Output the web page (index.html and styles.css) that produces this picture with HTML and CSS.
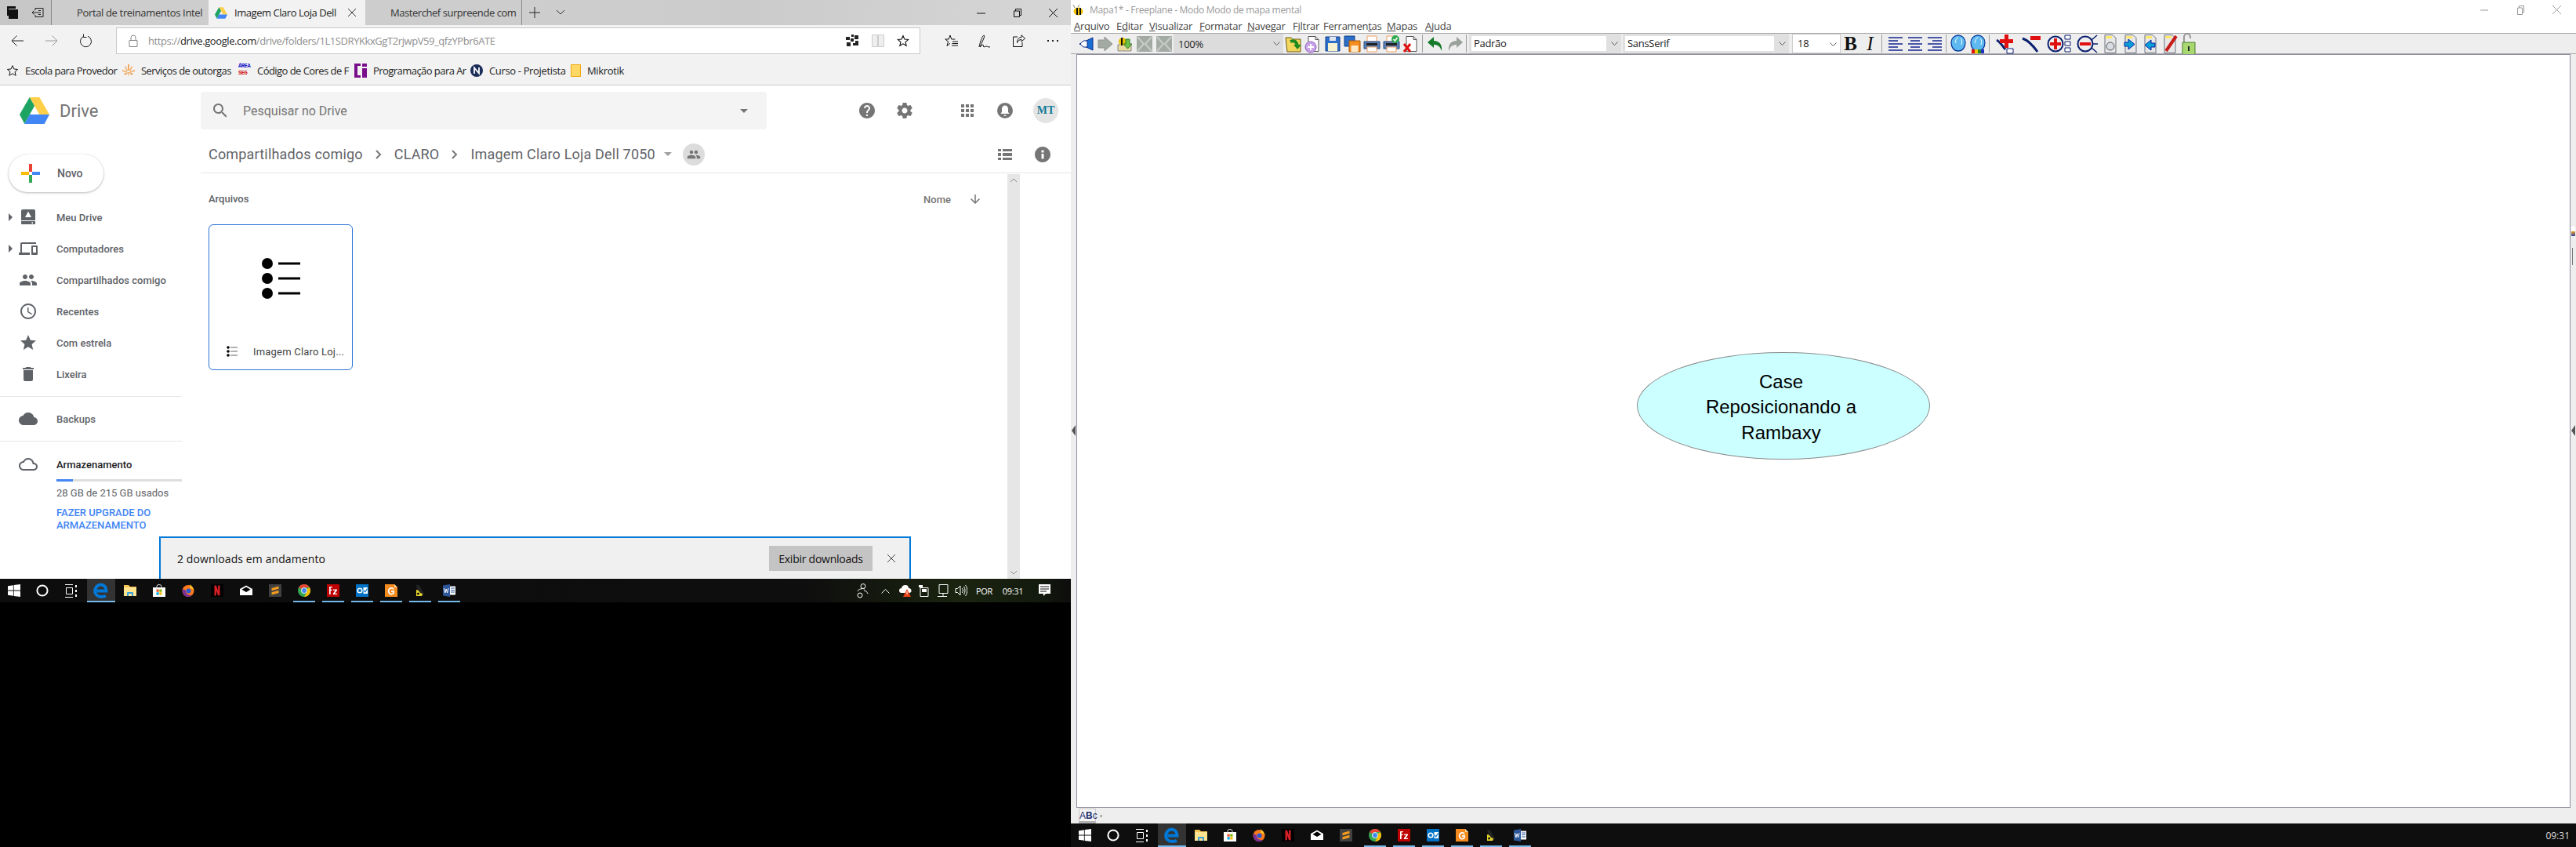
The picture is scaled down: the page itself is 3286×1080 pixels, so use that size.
FILE: index.html
```html
<!DOCTYPE html>
<html lang="pt">
<head>
<meta charset="utf-8">
<title>Google Drive e Freeplane</title>
<link rel="stylesheet" href="styles.css">
</head>
<body>
<svg class="defs" width="0" height="0" aria-hidden="true">
  <defs>
    <symbol id="drive" viewBox="0 0 38 34"><path fill="#ffcf4a" d="M12.7 0h12.6L38 22H25.3z"/><path fill="#1da462" d="M12.7 0L0 22l6.3 12L19 11z"/><path fill="#4285f4" d="M6.3 34h25.4L38 22H12.7z"/></symbol>
    <symbol id="win" viewBox="0 0 16 16"><path fill="#fff" d="M0 2.2l6.9-1v6.4H0zM7.7 1.1L16 0v7.6H7.7zM0 8.4h6.9v6.4l-6.9-1zM7.7 8.4H16V16l-8.3-1.1z"/></symbol>
    <symbol id="cortana" viewBox="0 0 16 16"><circle cx="8" cy="8" r="6.6" fill="none" stroke="#fff" stroke-width="2"/></symbol>
    <symbol id="taskview" viewBox="0 0 17 17"><path fill="none" stroke="#fff" d="M1 .5h10M1 16.500h10M2.500 4.500h8v8h-8z"/><path fill="#fff" d="M14 1h2v3h-2zM14 7h2v3h-2zM14 13h2v3h-2z"/></symbol>
    <symbol id="edge" viewBox="0 0 20 20"><path fill="none" stroke="#0078d7" stroke-width="4" d="M4.500 10.500h12c0-5-3-8-7-8S2.200 6 2.200 10.500 6 18 11 18c2 0 3.500-.4 5-1.200"/></symbol>
    <symbol id="explorer" viewBox="0 0 16 16"><path fill="#f6c452" d="M0 1h6l2 2h8v12H0z"/><path fill="#ffe38f" d="M0 4h16v11H0z"/><path fill="#3aa0dc" d="M4 15v-4a1 1 0 0 1 1-1h6a1 1 0 0 1 1 1v4h-2v-3H6v3z"/></symbol>
    <symbol id="store" viewBox="0 0 16 16"><path fill="#fff" d="M0 4h16v12H0z"/><path fill="none" stroke="#ddd" d="M5 5V2.500a3 2 0 0 1 6 0V5"/><path fill="#f25022" d="M4.500 6.500h3.200v3.200H4.500z"/><path fill="#7fba00" d="M8.300 6.500h3.200v3.200H8.300z"/><path fill="#00a4ef" d="M4.500 10.300h3.200v3.200H4.500z"/><path fill="#ffb900" d="M8.300 10.300h3.200v3.200H8.300z"/></symbol>
    <symbol id="firefox" viewBox="0 0 16 16"><circle cx="8" cy="8.500" r="7.500" fill="#ff7a1a"/><path fill="#7a2e9c" d="M1 6c-1 5 2 10 7 10 2 0 4-1 5-2.500C9 15 4 12 5 8z"/><path fill="#ffc928" d="M10 0c3 2 5 5 5 8-1-2-3-3-5-3 1-2 1-3 0-5z"/><circle cx="8.500" cy="8.500" r="3" fill="#2a5bd7"/></symbol>
    <symbol id="netflix" viewBox="0 0 16 16"><path fill="#000" d="M0 0h16v16H0z"/><path fill="#d81f26" d="M4.500 1.500h2.400l2.200 6.500V1.500h2.400v13l-2.400-.3L6.900 8v6.200l-2.400.3z"/></symbol>
    <symbol id="mail" viewBox="0 0 16 16"><path fill="#fff" d="M0 6l8-4.500L16 6v8H0z"/><path fill="#000" d="M2.500 6.800L8 3.500l5.500 3.300L8 10z"/></symbol>
    <symbol id="sublime" viewBox="0 0 16 16"><path fill="#414141" d="M0 0h16v16H0z"/><path fill="#f59b1c" d="M12.500 2.500v3.200L3.500 8.300V5zM3.500 13.500v-3.200l9-2.600v3.300z"/></symbol>
    <symbol id="chrome" viewBox="0 0 16 16"><circle cx="8" cy="8" r="8" fill="#34a853"/><path fill="#ea4335" d="M1.100 4C2.500 1.600 5 0 8 0c3 0 5.500 1.600 6.900 4H8a4 4 0 0 0-3.500 2z"/><path fill="#fbbc05" d="M14.900 4c1.500 2.500 1.400 5.500 0 8-1.400 2.400-4 4-6.900 4l3.500-6a4 4 0 0 0 0-4z"/><circle cx="8" cy="8" r="3.800" fill="#fff"/><circle cx="8" cy="8" r="2.900" fill="#4285f4"/></symbol>
    <symbol id="filezilla" viewBox="0 0 16 16"><path fill="#bf0000" d="M0 0h16v16H0z"/><path fill="#fff" d="M3 3h4v1.300H4.700v2.500h2v1.300h-2V13H3zM8 6.500h5v1.200l-3 4h3V13H7.800v-1.200l3-4H8z"/></symbol>
    <symbol id="outlook" viewBox="0 0 16 16"><path fill="#0072c6" d="M0 0h16v16H0z"/><circle cx="5" cy="8" r="2.800" fill="none" stroke="#fff" stroke-width="1.600"/><path fill="#fff" d="M9.500 4H15v8H9.500z"/><path fill="none" stroke="#0072c6" stroke-width="1.200" d="M10 8l1.800 1.800L14.500 5.500"/></symbol>
    <symbol id="gorange" viewBox="0 0 16 16"><path fill="#f58b1f" d="M0 0h12l4 4v12H0z"/><path fill="#ffd9a8" d="M12 0l4 4h-4z"/><path fill="none" stroke="#fff" stroke-width="1.800" d="M11 6.500A3.500 3.800 0 1 0 11 11V8.800H8"/></symbol>
    <symbol id="linux" viewBox="0 0 16 16"><path fill="#222" d="M3 1c3-1 5 1 6 4l4 7-2 3H6z"/><path fill="#e8d72a" d="M3 7c2 0 4 2 5 4l3 1-1 3H3z"/><circle cx="5.500" cy="12" r="1.500" fill="#111"/></symbol>
    <symbol id="word" viewBox="0 0 16 16"><path fill="#2b579a" d="M0 1.500L9 0v16l-9-1.500z"/><path fill="#fff" d="M9 2.500h7v11H9z"/><path fill="#2b579a" d="M10 4.500h5v1h-5zM10 7h5v1h-5zM10 9.500h5v1h-5z"/><path fill="none" stroke="#fff" d="M1.500 5l1.300 6 1.400-5 1.400 5L7 5"/></symbol>
    <symbol id="i-help" viewBox="0 0 24 24"><path d="M12 2C6.480 2 2 6.480 2 12s4.480 10 10 10 10-4.480 10-10S17.520 2 12 2zm1 17h-2v-2h2v2zm2.070-7.750l-.9.920C13.450 12.900 13 13.500 13 15h-2v-.5c0-1.100.45-2.100 1.170-2.830l1.240-1.260c.37-.36.59-.86.59-1.410 0-1.100-.9-2-2-2s-2 .9-2 2H8c0-2.210 1.790-4 4-4s4 1.790 4 4c0 .88-.36 1.680-.93 2.250z"/></symbol>
    <symbol id="arrow-l" viewBox="0 0 22 22"><path fill="#1a6fd4" stroke="#0a2a88" d="M20 3v16L3 11z"/><path fill="#fff" stroke="#0a2a88" d="M8 7h5v8H8l-4-4z"/></symbol>
    <symbol id="arrow-gray" viewBox="0 0 22 22"><path fill="#a3a9a3" stroke="#8f958f" d="M2 6h8V2l10 9-10 9v-4H2z"/></symbol>
    <symbol id="cross-gray" viewBox="0 0 22 22"><path fill="#a3a9a3" d="M1 1h20v20H1z"/><path fill="none" stroke="#c9cdc9" stroke-width="2" d="M2 2l8 9-8 9M20 2l-8 9 8 9"/></symbol>
    <symbol id="doc" viewBox="0 0 22 22"><path fill="#fff" stroke="#555" d="M5 1.500h9l4 4v15H5z"/><path fill="none" stroke="#555" d="M14 1.500v4h4"/></symbol>
    <symbol id="floppy" viewBox="0 0 22 22"><path fill="#2d6ec9" stroke="#123e87" d="M2 2h18v18H2z"/><path fill="#f7f2d0" d="M5 10h12v10H5z"/><path fill="#dfe6ef" d="M7 2h8v5H7z"/></symbol>
    <symbol id="floppy-o" viewBox="0 0 22 22"><path fill="#2d6ec9" stroke="#123e87" d="M1 1h13v13H1z"/><path fill="#f58d20" stroke="#a85a0a" d="M7 7h14v14H7z"/><path fill="#ffe9c4" d="M9.500 13h9v8h-9z"/></symbol>
    <symbol id="printer" viewBox="0 0 22 22"><path fill="#fff" stroke="#f0a060" d="M5 1h12v7H5z"/><path fill="#5c80b4" stroke="#2a4a80" d="M1 8h20v9H1z"/><path fill="#222" d="M4 10h14v3H4z"/><path fill="#fff" stroke="#f0a060" d="M5 15h12v6H5z"/></symbol>
    <symbol id="lines-l" viewBox="0 0 22 22"><path fill="none" stroke="#4a56a8" stroke-width="2" d="M2 3h18M2 7h12M2 11h18M2 15h12M2 19h18"/></symbol>
    <symbol id="lines-c" viewBox="0 0 22 22"><path fill="none" stroke="#4a56a8" stroke-width="2" d="M2 3h18M5 7h12M2 11h18M5 15h12M2 19h18"/></symbol>
    <symbol id="lines-r" viewBox="0 0 22 22"><path fill="none" stroke="#4a56a8" stroke-width="2" d="M2 3h18M8 7h12M2 11h18M8 15h12M2 19h18"/></symbol>
    <symbol id="fp-cloud" viewBox="0 0 22 26"><path fill="#5db9ef" stroke="#0f3d9e" stroke-width="1.300" d="M11 2c5 0 9 4 9 9 0 6-3 11-9 11S2 17 2 11c0-5 4-9 9-9z"/><path fill="none" stroke="#fff" d="M11 5c-3 1-4 4-3 7M14 6c2 2 2 5 1 8"/></symbol>
    <symbol id="page" viewBox="0 0 22 26"><path fill="#e8e8e8" stroke="#6e7280" d="M5 1.500h10l4 4v19H5z"/><path fill="#ffe96a" d="M6 3h8v3H6z"/></symbol>
  </defs>
</svg>

<div class="screen screen-left">
  <section class="edge-window">
    <div class="tabbar">
      <div class="tabbar-tools">
        <span class="slot-32"><svg width="16" height="18" viewBox="0 0 16 18"><path fill="#111" d="M1 1h11v3H1zM3 5h12v12H3z"/><path fill="#111" d="M1 4h2v9H1z"/></svg></span>
        <span class="slot-32"><svg width="16" height="14" viewBox="0 0 16 14"><path fill="none" stroke="#222" d="M5 4V1.500h10v11H5V10M1 7h8M3.500 4.500L1 7l2.500 2.500M9 4.500h3M9 7h3M9 9.500h3"/></svg></span>
      </div>
      <div class="tab"><span class="tab-title">Portal de treinamentos Intel</span></div>
      <div class="tab tab-active">
        <svg class="tab-favicon" width="16" height="15"><use href="#drive"/></svg>
        <span class="tab-title tab-title-active">Imagem Claro Loja Dell</span>
        <svg class="tab-x" width="12" height="12" viewBox="0 0 12 12"><path stroke="#333" fill="none" d="M1 1l10 10M11 1L1 11"/></svg>
      </div>
      <div class="tab tab-last"><span class="tab-title">Masterchef surpreende com</span></div>
      <span class="slot-32"><svg width="14" height="14" viewBox="0 0 14 14"><path stroke="#222" fill="none" d="M7 0v14M0 7h14"/></svg></span>
      <span class="slot-34"><svg width="12" height="8" viewBox="0 0 12 8"><path stroke="#333" fill="none" d="M1 1l5 5 5-5"/></svg></span>
      <div class="win-controls">
        <span class="win-btn"><svg width="11" height="11" viewBox="0 0 11 11"><path stroke="#111" d="M0 6h11"/></svg></span>
        <span class="win-btn"><svg width="11" height="11" viewBox="0 0 11 11"><path fill="none" stroke="#111" d="M1.500 3h7v7.500h-7zM3.500 3V.5h7v8H8.500"/></svg></span>
        <span class="win-btn"><svg width="11" height="11" viewBox="0 0 11 11"><path fill="none" stroke="#111" d="M0 0l11 11M11 0L0 11"/></svg></span>
      </div>
    </div>

    <div class="navbar">
      <span class="nav-btn"><svg width="16" height="14" viewBox="0 0 16 14"><path fill="none" stroke="#222" d="M16 7H1M7.500 .5L1 7l6.500 6.500"/></svg></span>
      <span class="nav-btn"><svg width="16" height="14" viewBox="0 0 16 14"><path fill="none" stroke="#999" d="M0 7h15M8.500 .5L15 7l-6.500 6.500"/></svg></span>
      <span class="nav-btn"><svg width="16" height="18" viewBox="0 0 16 18"><path fill="none" stroke="#222" d="M10 3.200A7 7 0 1 1 4.500 3.400M4.500 .5v4h4"/></svg></span>
      <div class="address">
        <svg class="lock" width="12" height="16" viewBox="0 0 12 16"><path fill="none" stroke="#888" d="M1 7.500h10v8H1zM3 7.500V4a3 3 0 0 1 6 0v3.500"/></svg>
        <span class="url">https://<b class="url-host">drive.google.com</b>/drive/folders/1L1SDRYKkxGgT2rjwpV59_qfzYPbr6ATE</span>
        <span class="addr-tools">
          <svg width="17" height="18" viewBox="0 0 17 18"><path fill="#222" d="M0 4h5v4H0zM7 1h3v3H7zM11 2h5v5h-5zM6 6h4v4H6zM1 11h5v5H1zM9 12h7v3H9zM12 9h4v3h-4z"/></svg>
          <svg width="16" height="18" viewBox="0 0 16 18"><path fill="#eee" stroke="#ccc" d="M.5 1.500h7v15h-7zM8.500 1.500h7v15h-7z"/></svg>
          <svg width="16" height="16" viewBox="0 0 24 24"><path fill="none" stroke="#111" stroke-width="1.700" d="M12 2.500l2.900 6.500 7 .7-5.300 4.700 1.600 7L12 17.800l-6.200 3.600 1.600-7L2.100 9.700l7-.7z"/></svg>
        </span>
      </div>
      <div class="nav-right">
        <span class="nav-btn-r"><svg width="17" height="17" viewBox="0 0 17 17"><path fill="none" stroke="#111" d="M7 1l1.800 5h4.500M7 1L5.200 6H.8l3.700 2.900-1.500 5.600L7 11.200M10 9h7M9.500 11.500H17M9 14h8"/></svg></span>
        <span class="nav-btn-r"><svg width="17" height="19" viewBox="0 0 17 19"><path fill="none" stroke="#111" d="M1 17c1-6 4-14 6-15 1 0 1 2-1 6-1 3-3 6-4 9 1-1 3-3 4-3s0 3 1 3 2-1 3-1 2 1 5 1"/></svg></span>
        <span class="nav-btn-r"><svg width="16" height="16" viewBox="0 0 16 16"><path fill="none" stroke="#111" d="M11 .8L15.500 5 11 9V6.500C8 6.500 6.500 8 5.500 10.500 5.500 6 8 3.500 11 3.500zM6 3H.5v12.500H12V10"/></svg></span>
        <span class="nav-btn-r"><svg width="14" height="2" viewBox="0 0 14 2"><path fill="#222" d="M0 0h2v2H0zM6 0h2v2H6zM12 0h2v2h-2z"/></svg></span>
      </div>
    </div>

    <div class="favbar">
      <svg class="fav-star" width="16" height="16" viewBox="0 0 24 24"><path fill="none" stroke="#111" stroke-width="1.500" d="M12 2.500l2.900 6.500 7 .7-5.300 4.700 1.600 7L12 17.800l-6.200 3.600 1.600-7L2.100 9.700l7-.7z"/></svg>
      <span class="fav-text">Escola para Provedor</span>
      <svg class="fav-icon" width="16" height="18" viewBox="0 0 16 18"><path fill="#f2a860" d="M7 1h2v8H7zM4 3l3 6-1 1-3-6zM12 3L9 9l1 1 3-6zM0 8l6 2v1L0 10zM16 8l-6 2v1l6-1zM7 11h2l-1 6zM2 13l4-2 1 1-3 3zM14 13l-4-2-1 1 3 3z"/></svg>
      <span class="fav-text">Serviços de outorgas</span>
      <span class="fav-icon area-icon"><span class="area-top">ÁREA</span><span class="area-bottom">SEG</span></span>
      <span class="fav-text">Código de Cores de F</span>
      <svg class="fav-icon" width="16" height="18" viewBox="0 0 16 18"><path fill="#7a0f8c" d="M0 0h8v3H4v12h4v3H0zM10 0h6v4h-6zM10 6h6v12h-6z"/></svg>
      <span class="fav-text">Programação para Ar</span>
      <svg class="fav-icon" width="16" height="16" viewBox="0 0 16 16"><circle cx="8" cy="8" r="8" fill="#1c2d5a"/><path fill="none" stroke="#fff" stroke-width="1.800" d="M5 12V4.500l6 7V4"/></svg>
      <span class="fav-text fav-text-free">Curso - Projetista</span>
      <svg class="fav-icon" width="13" height="16" viewBox="0 0 13 16"><path fill="#ffd866" stroke="#f0a810" d="M.5.500h12v15H.5z"/></svg>
      <span class="fav-text fav-text-free">Mikrotik</span>
    </div>

    <main class="drive">
      <header class="drive-head">
        <div class="brand">
          <svg width="38" height="34"><use href="#drive"/></svg>
          <span class="brand-name">Drive</span>
        </div>
        <div class="searchbox">
          <svg class="g-icon g-search" width="24" height="24" viewBox="0 0 24 24"><path d="M15.500 14h-.79l-.28-.27C15.410 12.590 16 11.110 16 9.500 16 5.910 13.090 3 9.500 3S3 5.910 3 9.500 5.910 16 9.500 16c1.610 0 3.090-.59 4.230-1.570l.27.28v.79l5 4.990L20.490 19l-4.990-5zm-6 0C7.010 14 5 11.990 5 9.500S7.010 5 9.500 5 14 7.010 14 9.500 11.990 14 9.500 14z"/></svg>
          <span class="search-text">Pesquisar no Drive</span>
          <span class="search-caret"></span>
        </div>
        <div class="head-tools">
          <svg class="g-icon" width="24" height="24"><use href="#i-help"/></svg>
          <svg class="g-icon" width="24" height="24" viewBox="0 0 24 24"><path d="M19.430 12.980c.04-.32.07-.64.07-.98s-.03-.66-.07-.98l2.110-1.650c.19-.15.24-.42.12-.64l-2-3.460c-.12-.22-.39-.3-.61-.22l-2.490 1c-.52-.4-1.080-.73-1.690-.98l-.38-2.650C14.460 2.180 14.250 2 14 2h-4c-.25 0-.46.18-.49.42l-.38 2.650c-.61.25-1.170.59-1.690.98l-2.490-1c-.23-.09-.49 0-.61.22l-2 3.460c-.13.22-.07.49.12.64l2.110 1.650c-.04.32-.07.65-.07.98s.03.66.07.98l-2.110 1.650c-.19.15-.24.42-.12.64l2 3.460c.12.22.39.3.61.22l2.490-1c.52.4 1.080.73 1.690.98l.38 2.650c.03.24.24.42.49.42h4c.25 0 .46-.18.49-.42l.38-2.650c.61-.25 1.170-.59 1.690-.98l2.490 1c.23.09.49 0 .61-.22l2-3.460c.12-.22.07-.49-.12-.64l-2.110-1.650zM12 15.500c-1.930 0-3.500-1.570-3.500-3.500s1.570-3.500 3.500-3.500 3.500 1.570 3.500 3.500-1.570 3.500-3.500 3.500z"/></svg>
          <svg class="g-icon tool-apps" width="24" height="24" viewBox="0 0 24 24"><path d="M4 8h4V4H4v4zm6 12h4v-4h-4v4zm-6 0h4v-4H4v4zm0-6h4v-4H4v4zm6 0h4v-4h-4v4zm6-10v4h4V4h-4zm-6 4h4V4h-4v4zm6 6h4v-4h-4v4zm0 6h4v-4h-4v4z"/></svg>
          <svg class="g-icon" width="24" height="24" viewBox="0 0 24 24"><circle cx="12" cy="12" r="10"/><path fill="#fff" d="M12 5.500c-2.500 0-4 2-4 4.500v4l-1.500 1.500v.5h11v-.5L16 14v-4c0-2.500-1.500-4.500-4-4.500zM10.500 17.500h3a1.500 1.500 0 0 1-3 0z"/></svg>
          <span class="avatar">MT</span>
        </div>
      </header>

      <div class="drive-body">
        <aside class="sidebar">
          <div class="new-btn">
            <svg width="24" height="24" viewBox="0 0 24 24"><path fill="#ea4335" d="M10 0h4v10h-4z"/><path fill="#4285f4" d="M14 10h10v4H14z"/><path fill="#34a853" d="M10 14h4v10h-4z"/><path fill="#fbbc05" d="M0 10h10v4H0z"/></svg>
            <span class="new-label">Novo</span>
          </div>
          <nav class="nav-list">
            <a class="nav-item"><span class="caret"></span><svg class="g-icon nav-ic" width="24" height="24" viewBox="0 0 24 24"><path fill-rule="evenodd" d="M5 2h14c1.100 0 2 .9 2 2v12H3V4c0-1.100.9-2 2-2zm7 2.500L8 12h8zM3 17h18v3c0 .6-.4 1-1 1H4c-.6 0-1-.4-1-1zm15 1.500a1 1 0 1 0 0 1.500z"/></svg><span class="nav-label">Meu Drive</span></a>
            <a class="nav-item"><span class="caret"></span><svg class="g-icon nav-ic" width="24" height="24" viewBox="0 0 24 24"><path d="M4 6h18V4H4c-1.100 0-2 .9-2 2v11H0v3h14v-3H4V6zm19 2h-6c-.55 0-1 .45-1 1v10c0 .55.45 1 1 1h6c.55 0 1-.45 1-1V9c0-.55-.45-1-1-1zm-1 9h-4v-7h4v7z"/></svg><span class="nav-label">Computadores</span></a>
            <a class="nav-item"><span class="caret caret-none"></span><svg class="g-icon nav-ic" width="24" height="24" viewBox="0 0 24 24"><path d="M16 11c1.660 0 2.990-1.340 2.990-3S17.660 5 16 5c-1.660 0-3 1.340-3 3s1.340 3 3 3zm-8 0c1.660 0 2.990-1.340 2.990-3S9.660 5 8 5C6.340 5 5 6.340 5 8s1.340 3 3 3zm0 2c-2.330 0-7 1.170-7 3.500V19h14v-2.500c0-2.330-4.670-3.500-7-3.500zm8 0c-.29 0-.62.02-.97.05 1.160.84 1.970 1.970 1.970 3.450V19h6v-2.500c0-2.330-4.670-3.500-7-3.500z"/></svg><span class="nav-label">Compartilhados comigo</span></a>
            <a class="nav-item"><span class="caret caret-none"></span><svg class="g-icon nav-ic" width="24" height="24" viewBox="0 0 24 24"><path d="M11.990 2C6.470 2 2 6.480 2 12s4.470 10 9.990 10C17.520 22 22 17.520 22 12S17.520 2 11.990 2zM12 20c-4.420 0-8-3.580-8-8s3.580-8 8-8 8 3.580 8 8-3.580 8-8 8zm.5-13H11v6l5.250 3.150.75-1.230-4.500-2.670z"/></svg><span class="nav-label">Recentes</span></a>
            <a class="nav-item"><span class="caret caret-none"></span><svg class="g-icon nav-ic" width="24" height="24" viewBox="0 0 24 24"><path d="M12 17.270L18.180 21l-1.640-6.880L22 9.240l-7.190-.61L12 2 9.190 8.630 2 9.240l5.460 4.880L5.820 21z"/></svg><span class="nav-label">Com estrela</span></a>
            <a class="nav-item"><span class="caret caret-none"></span><svg class="g-icon nav-ic" width="24" height="24" viewBox="0 0 24 24"><path d="M6 19c0 1.100.9 2 2 2h8c1.100 0 2-.9 2-2V7H6v12zM19 4h-3.500l-1-1h-5l-1 1H5v2h14V4z"/></svg><span class="nav-label">Lixeira</span></a>
          </nav>
          <hr class="side-rule">
          <a class="nav-item"><span class="caret caret-none"></span><svg class="g-icon nav-ic" width="24" height="24" viewBox="0 0 24 24"><path d="M19.350 10.040C18.670 6.590 15.640 4 12 4 9.110 4 6.600 5.640 5.350 8.040 2.340 8.360 0 10.910 0 14c0 3.310 2.690 6 6 6h13c2.760 0 5-2.240 5-5 0-2.640-2.050-4.780-4.650-4.960z"/></svg><span class="nav-label">Backups</span></a>
          <hr class="side-rule">
          <a class="nav-item nav-storage"><span class="caret caret-none"></span><svg class="g-icon nav-ic" width="24" height="24" viewBox="0 0 24 24"><path d="M19.350 10.040C18.670 6.590 15.640 4 12 4 9.110 4 6.600 5.640 5.350 8.040 2.340 8.360 0 10.910 0 14c0 3.310 2.690 6 6 6h13c2.760 0 5-2.240 5-5 0-2.640-2.050-4.780-4.650-4.960zM19 18H6c-2.210 0-4-1.790-4-4 0-2.050 1.530-3.760 3.560-3.970l1.070-.11.5-.95C8.080 7.140 9.940 6 12 6c2.620 0 4.880 1.860 5.390 4.430l.3 1.500 1.530.11c1.560.1 2.780 1.410 2.780 2.960 0 1.650-1.350 3-3 3z"/></svg><span class="nav-label nav-label-dark">Armazenamento</span></a>
          <div class="storage">
            <div class="storage-track"><div class="storage-fill"></div></div>
            <div class="storage-used">28 GB de 215 GB usados</div>
            <a class="storage-link">FAZER UPGRADE DO ARMAZENAMENTO</a>
          </div>
        </aside>

        <section class="content">
          <div class="crumbs">
            <span class="crumb">Compartilhados comigo</span>
            <svg class="crumb-sep" width="10" height="14" viewBox="0 0 10 14"><path fill="none" stroke="#777" stroke-width="2" d="M2 2l5 5-5 5"/></svg>
            <span class="crumb">CLARO</span>
            <svg class="crumb-sep" width="10" height="14" viewBox="0 0 10 14"><path fill="none" stroke="#777" stroke-width="2" d="M2 2l5 5-5 5"/></svg>
            <span class="crumb">Imagem Claro Loja Dell 7050</span>
            <span class="crumb-caret"></span>
            <span class="shared-badge"><svg class="g-icon" width="18" height="18" viewBox="0 0 24 24"><path d="M16 11c1.660 0 2.990-1.340 2.990-3S17.660 5 16 5c-1.660 0-3 1.340-3 3s1.340 3 3 3zm-8 0c1.660 0 2.990-1.340 2.990-3S9.660 5 8 5C6.340 5 5 6.340 5 8s1.340 3 3 3zm0 2c-2.330 0-7 1.170-7 3.500V19h14v-2.500c0-2.330-4.670-3.500-7-3.500zm8 0c-.29 0-.62.02-.97.05 1.160.84 1.970 1.970 1.970 3.450V19h6v-2.500c0-2.330-4.670-3.500-7-3.500z"/></svg></span>
            <span class="crumb-tools">
              <svg class="g-icon" width="24" height="24" viewBox="0 0 24 24"><path d="M3 5h4v3H3zM9 5h12v3H9zM3 10h4v4H3zM9 10h12v4H9zM3 16h4v3H3zM9 16h12v3H9z"/></svg>
              <svg class="g-icon" width="24" height="24" viewBox="0 0 24 24"><path d="M12 2C6.480 2 2 6.480 2 12s4.480 10 10 10 10-4.480 10-10S17.520 2 12 2zm1.500 15.500h-3v-6.500h3zm0-8h-3V6.500h3z"/></svg>
            </span>
          </div>
          <div class="files-row">
            <div class="files">
              <div class="files-head">
                <span class="section-title">Arquivos</span>
                <span class="sort"><span class="sort-label">Nome</span><svg class="g-icon" width="18" height="18" viewBox="0 0 24 24"><path d="M20 12l-1.410-1.410L13 16.170V4h-2v12.170l-5.580-5.590L4 12l8 8 8-8z"/></svg></span>
              </div>
              <article class="file-card">
                <div class="file-thumb">
                  <svg width="44" height="52" viewBox="0 0 44 52"><g fill="#000"><circle cx="7" cy="7" r="7"/><circle cx="7" cy="26" r="7"/><circle cx="7" cy="45" r="7"/><path d="M21 5.500h28v3H21zM21 24.500h28v3H21zM21 43.500h28v3H21z"/></g></svg>
                </div>
                <div class="file-foot">
                  <svg width="14" height="14" viewBox="0 0 14 14"><g fill="#000"><circle cx="2" cy="2" r="1.800"/><circle cx="2" cy="7" r="1.800"/><circle cx="2" cy="12" r="1.800"/></g><path stroke="#666" d="M5 2h9M5 7h9M5 12h9"/></svg>
                  <span class="file-name">Imagem Claro Loj...</span>
                </div>
              </article>
            </div>
            <div class="vscroll">
              <svg width="10" height="6" viewBox="0 0 10 6"><path fill="none" stroke="#888" d="M1 5l4-4 4 4"/></svg>
              <svg width="10" height="6" viewBox="0 0 10 6"><path fill="none" stroke="#888" d="M1 1l4 4 4-4"/></svg>
            </div>
            <div class="files-margin"></div>
          </div>
        </section>
      </div>

      <div class="download-bar">
        <span class="download-text">2 downloads em andamento</span>
        <span class="download-btn">Exibir downloads</span>
        <svg class="download-x" width="12" height="12" viewBox="0 0 12 12"><path fill="none" stroke="#444" d="M1 1l10 10M11 1L1 11"/></svg>
      </div>
    </main>

    <footer class="taskbar taskbar-left">
      <span class="tb-slot tb-first"><svg width="16" height="16"><use href="#win"/></svg></span>
      <span class="tb-slot tb-first"><svg width="16" height="16"><use href="#cortana"/></svg></span>
      <span class="tb-slot tb-first tb-tv"><svg width="17" height="17"><use href="#taskview"/></svg></span>
      <span class="tb-slot tb-active"><svg width="20" height="20"><use href="#edge"/></svg></span>
      <span class="tb-slot"><svg width="16" height="16"><use href="#explorer"/></svg></span>
      <span class="tb-slot"><svg width="16" height="16"><use href="#store"/></svg></span>
      <span class="tb-slot"><svg width="16" height="16"><use href="#firefox"/></svg></span>
      <span class="tb-slot"><svg width="16" height="16"><use href="#netflix"/></svg></span>
      <span class="tb-slot"><svg width="16" height="16"><use href="#mail"/></svg></span>
      <span class="tb-slot"><svg width="16" height="16"><use href="#sublime"/></svg></span>
      <span class="tb-slot tb-open"><svg width="16" height="16"><use href="#chrome"/></svg></span>
      <span class="tb-slot tb-open"><svg width="16" height="16"><use href="#filezilla"/></svg></span>
      <span class="tb-slot tb-open"><svg width="16" height="16"><use href="#outlook"/></svg></span>
      <span class="tb-slot tb-open"><svg width="16" height="16"><use href="#gorange"/></svg></span>
      <span class="tb-slot tb-open"><svg width="16" height="16"><use href="#linux"/></svg></span>
      <span class="tb-slot tb-open"><svg width="16" height="16"><use href="#word"/></svg></span>
      <div class="tray">
        <svg width="15" height="20" viewBox="0 0 15 20"><path fill="none" stroke="#fff" d="M8 1.500a3 3 0 1 1 0 6 3 3 0 0 1 0-6zM4 19a3 3 0 1 1 0-6 3 3 0 0 1 0 6zM1 11c1-3 6-4 9-3M9 10c3 0 4 2 5 4"/></svg>
        <svg width="11" height="7" viewBox="0 0 11 7"><path fill="none" stroke="#fff" d="M.5 6.500l5-5 5 5"/></svg>
        <svg width="17" height="18" viewBox="0 0 17 18"><path fill="#fff" d="M8 2a4 4 0 0 1 4 4 3 3 0 0 1 1 6H3a3 3 0 0 1 0-6 5 5 0 0 1 5-4z"/><path fill="#e8421a" d="M10 7l5 10H5z"/><path fill="#fff" d="M9.500 10h1v4h-1z"/></svg>
        <svg width="14" height="18" viewBox="0 0 14 18"><path fill="none" stroke="#fff" d="M3 5.500h10v11H3z"/><path fill="#fff" d="M5 7h6v4H5zM1 2h5v3H1z"/></svg>
        <svg width="15" height="18" viewBox="0 0 15 18"><path fill="none" stroke="#fff" d="M3 1.500h11v11H3zM8 12.500v4M1 16.500h12"/></svg>
        <svg width="16" height="18" viewBox="0 0 16 18"><path fill="none" stroke="#fff" d="M1 6.500h2.500L7 3v12l-3.500-3.500H1zM9.500 6c1 2 1 4 0 6M11.500 4c2 3 2 7 0 10M13.500 2c3 4 3 10 0 14"/></svg>
        <span class="tray-text">POR</span>
        <span class="tray-text">09:31</span>
        <svg width="15" height="18" viewBox="0 0 15 18"><path fill="#fff" d="M0 1h15v12H9l-3 3v-3H0z"/><path stroke="#111" d="M2 4h11M2 7h11M2 10h8"/></svg>
      </div>
    </footer>
  </section>
  <div class="left-black"></div>
</div>

<div class="screen screen-right">
  <div class="fp-title">
    <svg class="fp-bee" width="15" height="15" viewBox="0 0 15 15"><ellipse cx="7.500" cy="9.500" rx="6" ry="5" fill="#f2c200"/><path fill="#111" d="M5 5h2v9H5zM9 5h2v9H9z"/><path fill="none" stroke="#888" d="M3 5L1 1M7 4l2-3"/></svg>
    <span class="fp-title-text">Mapa1* - Freeplane - Modo Modo de mapa mental</span>
    <span class="fp-winctl">
      <svg width="10" height="10" viewBox="0 0 10 10"><path stroke="#999" d="M0 5h10"/></svg>
      <svg width="10" height="12" viewBox="0 0 10 12"><path fill="none" stroke="#999" d="M1.500 3h6v8.500h-6zM3.500 3V.5h6v8H7.500"/></svg>
      <svg width="11" height="11" viewBox="0 0 11 11"><path fill="none" stroke="#999" d="M0 0l11 11M11 0L0 11"/></svg>
    </span>
  </div>
  <div class="fp-menu">
    <span class="fp-m m1"><u>A</u>rquivo</span>
    <span class="fp-m m2">E<u>d</u>itar</span>
    <span class="fp-m m3"><u>V</u>isualizar</span>
    <span class="fp-m m4"><u>F</u>ormatar</span>
    <span class="fp-m m5"><u>N</u>avegar</span>
    <span class="fp-m m6">F<u>i</u>ltrar</span>
    <span class="fp-m m7">Ferramen<u>t</u>as</span>
    <span class="fp-m m8"><u>M</u>apas</span>
    <span class="fp-m m9"><u>A</u>juda</span>
  </div>
  <div class="fp-toolbar">
    <span class="ti"><svg width="22" height="22"><use href="#arrow-l"/></svg></span>
    <span class="ti"><svg width="22" height="22"><use href="#arrow-gray"/></svg></span>
    <span class="ti"><svg width="22" height="22" viewBox="0 0 22 22"><path fill="#e8d9a0" stroke="#888" d="M2 12h17v8H2z"/><ellipse cx="8" cy="8" rx="5" ry="5" fill="#e6c200"/><path fill="#111" d="M6 3h2v10H6z"/><path fill="#6ec04a" stroke="#2f7a20" d="M12 5h5v6h3l-5.500 6L9 11h3z"/></svg></span>
    <span class="ti"><svg width="22" height="22"><use href="#cross-gray"/></svg></span>
    <span class="ti"><svg width="22" height="22"><use href="#cross-gray"/></svg></span>
    <span class="fp-combo combo-zoom"><span class="combo-text">100%</span><svg class="combo-caret" width="9" height="6" viewBox="0 0 9 6"><path fill="none" stroke="#555" d="M.5.500l4 4 4-4"/></svg></span>
    <span class="ti"><svg width="22" height="24" viewBox="0 0 22 24"><path fill="#f3d65c" stroke="#6b5a10" d="M1 4h7l2 2h10v16H3z"/><path fill="none" stroke="#1f8a1f" stroke-width="4" d="M7 9c5-2 8 0 9 6"/><path fill="#1f8a1f" d="M11 13h10l-5 6z"/></svg></span>
    <span class="ti"><svg width="22" height="24" viewBox="0 0 22 24"><use href="#doc"/><circle cx="8" cy="16" r="7" fill="#c9a2e8" stroke="#8a5fc0"/><path stroke="#fff" stroke-width="2" d="M4 16h8M8 12v8"/></svg></span>
    <span class="ti"><svg width="22" height="22"><use href="#floppy"/></svg></span>
    <span class="ti"><svg width="22" height="22"><use href="#floppy-o"/></svg></span>
    <span class="ti"><svg width="22" height="22"><use href="#printer"/></svg></span>
    <span class="ti"><svg width="22" height="22" viewBox="0 0 22 22"><use href="#printer"/><circle cx="16" cy="5" r="5" fill="#2fa84f"/><path fill="none" stroke="#fff" stroke-width="1.500" d="M13.500 5l2 2 3-4"/></svg></span>
    <span class="ti"><svg width="22" height="22" viewBox="0 0 22 22"><use href="#doc"/><path fill="none" stroke="#e01010" stroke-width="3" d="M2 11l8 10M10 11L2 21"/></svg></span>
    <span class="fp-sep"></span>
    <span class="ti ti-sm"><svg width="22" height="22" viewBox="0 0 22 22"><path fill="#157a2a" d="M9 2L1 9l8 7v-4c5 0 8 2 10 8 1-8-3-13-10-13z"/></svg></span>
    <span class="ti"><svg width="22" height="22" viewBox="0 0 22 22"><path fill="#9aa09a" d="M13 2l8 7-8 7v-4c-5 0-8 2-10 8-1-8 3-13 10-13z"/></svg></span>
    <span class="fp-sep"></span>
    <span class="fp-combo combo-style"><span class="combo-field">Padrão</span><svg class="combo-caret" width="9" height="6" viewBox="0 0 9 6"><path fill="none" stroke="#555" d="M.5.500l4 4 4-4"/></svg></span>
    <span class="fp-combo combo-font"><span class="combo-field">SansSerif</span><svg class="combo-caret" width="9" height="6" viewBox="0 0 9 6"><path fill="none" stroke="#555" d="M.5.500l4 4 4-4"/></svg></span>
    <span class="fp-combo combo-size"><span class="combo-field combo-field-plain">18</span><svg class="combo-caret" width="9" height="6" viewBox="0 0 9 6"><path fill="none" stroke="#555" d="M.5.500l4 4 4-4"/></svg></span>
    <span class="ti fp-b">B</span>
    <span class="ti fp-i">I</span>
    <span class="fp-sep"></span>
    <span class="ti ti-mt"><svg width="22" height="22"><use href="#lines-l"/></svg></span>
    <span class="ti"><svg width="22" height="22"><use href="#lines-c"/></svg></span>
    <span class="ti"><svg width="22" height="22"><use href="#lines-r"/></svg></span>
    <span class="fp-sep"></span>
    <span class="ti"><svg width="22" height="26"><use href="#fp-cloud"/></svg></span>
    <span class="ti"><svg width="22" height="26" viewBox="0 0 22 26"><use href="#fp-cloud"/><path fill="#e01010" d="M3 20h4v5H3z"/><path fill="#f0c800" d="M7 20h4v5H7z"/><path fill="#2a8a20" d="M11 20h4v5h-4z"/><path fill="#2030c0" d="M15 20h4v5h-4z"/></svg></span>
    <span class="fp-sep"></span>
    <span class="ti ti-37"><svg width="28" height="26" viewBox="0 0 28 26"><path fill="none" stroke="#0a1f6e" stroke-width="3" d="M2 8c4 2 8 8 11 12"/><path fill="#e01010" d="M12 1h5v6h6v5h-6v6h-5v-6H6V7h6z"/><path fill="#fff" stroke="#0a1f6e" d="M15 19h8v6h-8z"/></svg></span>
    <span class="ti ti-29"><svg width="26" height="24" viewBox="0 0 26 24"><path fill="none" stroke="#0a1f6e" stroke-width="3" d="M1 5c6 2 14 10 19 17"/><path fill="#e01010" d="M11 2h13v5H11z"/></svg></span>
    <span class="ti ti-42"><svg width="32" height="26" viewBox="0 0 32 26"><circle cx="11" cy="13" r="9.500" fill="none" stroke="#0a1f6e" stroke-width="2"/><path fill="#e01010" d="M9 6h4v5h5v4h-5v5H9v-5H4v-4h5z"/><path fill="#fff" stroke="#0a1f6e" d="M23 2h7v5h-7zM23 10h7v5h-7zM23 18h7v5h-7z"/></svg></span>
    <span class="ti ti-30"><svg width="28" height="26" viewBox="0 0 28 26"><circle cx="11" cy="13" r="9.500" fill="none" stroke="#0a1f6e" stroke-width="2"/><path fill="#e01010" d="M4 11h14v4H4z"/><path fill="none" stroke="#0a1f6e" stroke-width="1.500" d="M19 8l7-6M21 13h6M19 18l7 6"/></svg></span>
    <span class="ti ti-26"><svg width="22" height="26" viewBox="0 0 22 26"><use href="#page"/><circle cx="12" cy="16" r="5" fill="#d8dce4" stroke="#555"/></svg></span>
    <span class="ti"><svg width="22" height="26" viewBox="0 0 22 26"><use href="#page"/><path fill="#0a9fd8" stroke="#0a1f9e" d="M9 7h5v5h4l-6.500 8L5 12h4z" transform="rotate(-90 11 14)"/></svg></span>
    <span class="ti"><svg width="22" height="26" viewBox="0 0 22 26"><use href="#page"/><path fill="#0a9fd8" stroke="#0a1f9e" d="M9 7h5v5h4l-6.500 8L5 12h4z" transform="rotate(90 11 14)"/></svg></span>
    <span class="ti"><svg width="24" height="26" viewBox="0 0 24 26"><use href="#page"/><path fill="none" stroke="#c81c1c" stroke-width="4" d="M8 22L21 3"/></svg></span>
    <span class="ti"><svg width="20" height="30" viewBox="0 0 20 30"><path fill="none" stroke="#999" stroke-width="2" d="M4 14V6a4 4 0 0 1 8 0v2"/><path fill="#a8d870" stroke="#4a7a30" d="M2 13h16v16H2z"/><path fill="#222" d="M9 18h2v6H9z"/></svg></span>
  </div>
  <div class="fp-main">
    <div class="fp-canvas">
      <div class="mind-node"><span class="node-text">Case<br>Reposicionando a<br>Rambaxy</span></div>
    </div>
    <svg class="handle handle-l" width="5" height="14" viewBox="0 0 5 14"><path fill="#555" d="M0 7l5-7v14z"/></svg>
    <svg class="handle handle-r" width="5" height="14" viewBox="0 0 5 14"><path fill="#555" d="M0 7l5-7v14z"/></svg>
    <span class="side-tick"></span>
    <span class="side-mark"></span>
  </div>
  <div class="fp-status">
    <span class="abc">A<span class="abc-b">B</span>c</span>
    <span class="status-dot"></span>
  </div>
  <footer class="taskbar taskbar-right">
    <span class="tb-slot tb-first"><svg width="16" height="16"><use href="#win"/></svg></span>
    <span class="tb-slot tb-first"><svg width="16" height="16"><use href="#cortana"/></svg></span>
    <span class="tb-slot tb-first tb-tv"><svg width="17" height="17"><use href="#taskview"/></svg></span>
    <span class="tb-slot tb-active"><svg width="20" height="20"><use href="#edge"/></svg></span>
    <span class="tb-slot"><svg width="16" height="16"><use href="#explorer"/></svg></span>
    <span class="tb-slot"><svg width="16" height="16"><use href="#store"/></svg></span>
    <span class="tb-slot"><svg width="16" height="16"><use href="#firefox"/></svg></span>
    <span class="tb-slot"><svg width="16" height="16"><use href="#netflix"/></svg></span>
    <span class="tb-slot"><svg width="16" height="16"><use href="#mail"/></svg></span>
    <span class="tb-slot"><svg width="16" height="16"><use href="#sublime"/></svg></span>
    <span class="tb-slot tb-open"><svg width="16" height="16"><use href="#chrome"/></svg></span>
    <span class="tb-slot tb-open"><svg width="16" height="16"><use href="#filezilla"/></svg></span>
    <span class="tb-slot tb-open"><svg width="16" height="16"><use href="#outlook"/></svg></span>
    <span class="tb-slot tb-open"><svg width="16" height="16"><use href="#gorange"/></svg></span>
    <span class="tb-slot tb-open"><svg width="16" height="16"><use href="#linux"/></svg></span>
    <span class="tb-slot tb-open"><svg width="16" height="16"><use href="#word"/></svg></span>
    <span class="right-clock">09:31</span>
  </footer>
</div>
</body>
</html>
```

FILE: styles.css
```css
* { box-sizing: border-box; }
html, body { margin: 0; padding: 0; }
body {
  width: 3286px;
  height: 1080px;
  display: flex;
  overflow: hidden;
  background: #000;
  font-family: "Open Sans", "Liberation Sans", sans-serif;
  color: #222;
}
.defs { position: absolute; }
svg { display: block; flex: none; }
.screen { height: 1080px; display: flex; flex-direction: column; }
.screen-left { width: 1366px; background: #000; }
.screen-right { width: 1920px; position: relative; background: #fff; }
.edge-window { height: 768px; display: flex; flex-direction: column; }
.left-black { flex: 1; background: #000; }

/* Edge tab strip */
.tabbar {
  height: 32px;
  display: flex;
  align-items: stretch;
  background: linear-gradient(90deg, #c6c6c6, #cfcfcf 40%, #cbcbcb 70%, #d6d6d6);
  font-size: 13px;
  letter-spacing: -.35px;
}
.tabbar-tools { display: flex; width: 66px; border-right: 1px solid #8a8a8a; }
.slot-32 { width: 32px; display: flex; align-items: center; justify-content: center; }
.slot-34 { width: 34px; display: flex; align-items: center; justify-content: center; }
.tab { width: 200px; display: flex; align-items: center; padding-left: 32px; overflow: hidden; background: #cdcdcd; color: #333; }
.tab-last { border-right: 1px solid #8a8a8a; letter-spacing: -.45px; }
.tab-active { background: #f2f2f2; padding-left: 8px; color: #222; letter-spacing: -.45px; }
.tab-favicon { margin-right: 9px; }
.tab-title { width: 166px; white-space: nowrap; flex: none; }
.tab-title-active { width: 133px; }
.tab-x { margin-left: 11px; }
.win-controls { margin-left: auto; display: flex; }
.win-btn { width: 46px; display: flex; align-items: center; justify-content: center; }

/* Edge address row */
.navbar { height: 40px; display: flex; align-items: center; background: #f2f2f2; }
.nav-btn { width: 44px; display: flex; justify-content: center; }
.address {
  margin-left: 16px;
  width: 1026px;
  height: 34px;
  display: flex;
  align-items: center;
  background: #fff;
  border: 1px solid #c8c8c8;
  padding-left: 15px;
}
.lock { margin-right: 13px; }
.url { font-size: 13px; color: #8e8e8e; white-space: nowrap; letter-spacing: -.42px; }
.url-host { font-weight: 400; color: #222; }
.addr-tools { margin-left: auto; display: flex; align-items: center; gap: 16px; padding-right: 13px; }
.nav-right { display: flex; margin-left: 18px; }
.nav-btn-r { width: 43px; display: flex; justify-content: center; align-items: center; }

/* Favorites */
.favbar {
  height: 37px;
  display: flex;
  align-items: center;
  background: #f2f2f2;
  border-bottom: 1px solid #c8c8c8;
  font-size: 13px;
  letter-spacing: -.55px;
  color: #222;
  padding-left: 8px;
}
.fav-icon { margin-left: 12px; }
.fav-text { width: 112px; margin-left: 8px; white-space: nowrap; }
.fav-text-free { width: 92px; letter-spacing: -.35px; }
.fav-text-free:last-child { width: auto; margin-left: 8px; }
.area-icon { width: 16px; height: 20px; display: flex; flex-direction: column; font: bold 7px/9px "Liberation Mono", monospace; letter-spacing: -.4px; overflow: hidden; }
.area-top { color: #1212c8; }
.area-bottom { color: #d01515; }

/* Drive page */
.drive { flex: 1; min-height: 0; display: flex; flex-direction: column; background: #fff; position: relative; font-family: Roboto, "Liberation Sans", sans-serif; overflow: hidden; }
.drive-head { height: 56px; padding-top: 8px; display: flex; align-items: flex-start; }
.brand { width: 256px; height: 48px; display: flex; align-items: center; padding-left: 25px; gap: 13px; }
.brand-name { font-size: 22px; color: #737373; }
.searchbox { width: 722px; height: 48px; background: #f4f4f4; border-radius: 4px; display: flex; align-items: center; padding-left: 13px; }
.g-icon { fill: #757575; }
.g-search { margin-right: 17px; }
.search-text { font-size: 16px; color: #757575; }
.search-caret { margin-left: auto; margin-right: 24px; border: 5px solid transparent; border-top-color: #757575; border-bottom: 0; }
.head-tools { height: 48px; display: flex; align-items: center; padding-left: 116px; }
.head-tools .g-icon { margin-right: 24px; }
.head-tools .tool-apps { margin-left: 32px; }
.avatar {
  width: 32px;
  height: 32px;
  border-radius: 50%;
  background: #e4e4e4;
  display: flex;
  align-items: center;
  justify-content: center;
  font: bold 14px "Liberation Serif", serif;
  color: #0f7a96;
}
.drive-body { flex: 1; min-height: 0; display: flex; }

/* Sidebar */
.sidebar { width: 256px; flex: none; }
.new-btn {
  margin: 32px 0 12px 11px;
  width: 121px;
  height: 48px;
  border-radius: 24px;
  background: #fff;
  box-shadow: 0 1px 3px rgba(60,64,67,.35), 0 0 1px rgba(60,64,67,.2);
  display: flex;
  align-items: center;
  padding-left: 16px;
  gap: 22px;
}
.new-label { font-size: 14px; font-weight: 500; color: #5f6368; }
.nav-list { display: flex; flex-direction: column; }
.nav-item { height: 40px; display: flex; align-items: center; padding-left: 8px; }
.caret { width: 16px; height: 16px; position: relative; flex: none; }
.caret::before { content: ""; position: absolute; left: 3px; top: 3px; border: 5px solid transparent; border-left-color: #5f6368; border-right: 0; }
.caret-none::before { display: none; }
.nav-ic { fill: #5f6368; }
.nav-label { margin-left: 24px; font-size: 13px; font-weight: 500; color: #5f6368; white-space: nowrap; }
.nav-label-dark { color: #202124; }
.side-rule { margin: 8px 24px 8px 0; height: 1px; border: 0; background: #e6e6e6; }
.nav-storage { margin-top: 10px; height: 38px; }
.storage { margin-left: 72px; width: 160px; }
.storage-track { height: 3px; background: #dedede; }
.storage-fill { width: 21px; height: 3px; background: #4285f4; }
.storage-used { margin-top: 6px; line-height: 18px; font-size: 13px; color: #5f6368; white-space: nowrap; }
.storage-link { display: block; margin-top: 8px; line-height: 15.5px; font-size: 13px; font-weight: 500; color: #4285f4; }

/* Main content */
.content { flex: 1; min-width: 0; display: flex; flex-direction: column; }
.crumbs { height: 56px; flex: none; border-bottom: 1px solid #e4e4e4; display: flex; align-items: center; padding: 8px 0 0 10px; }
.crumb { font-size: 18px; color: #5f6368; white-space: nowrap; letter-spacing: .18px; }
.crumb-sep { margin: 0 15px; }
.crumb-caret { margin-left: 11px; border: 5px solid transparent; border-top-color: #a0a0a0; border-bottom: 0; }
.shared-badge { margin-left: 14px; width: 28px; height: 28px; border-radius: 50%; background: #dcdcdc; display: flex; align-items: center; justify-content: center; }
.crumb-tools { margin-left: auto; display: flex; gap: 24px; padding-right: 24px; }
.files-row { flex: 1; min-height: 0; display: flex; }
.files { flex: 1; min-width: 0; padding: 0 0 0 10px; }
.files-head { height: 65px; display: flex; align-items: flex-start; justify-content: space-between; padding: 24px 32px 0 0; }
.section-title { font-size: 13px; font-weight: 500; color: #5f6368; line-height: 18px; }
.sort { display: flex; align-items: center; gap: 22px; height: 18px; }
.sort-label { font-size: 13px; font-weight: 500; color: #757575; }
.file-card { width: 184px; height: 186px; border: 1.5px solid #2a75d8; border-radius: 6px; display: flex; flex-direction: column; background: #fff; }
.file-thumb { height: 138px; display: flex; justify-content: center; padding-top: 42px; overflow: hidden; }
.file-thumb svg { overflow: visible; margin-left: -4px; }
.file-foot { flex: 1; display: flex; align-items: center; padding-left: 22px; }
.file-name { margin-left: 20px; font-size: 13px; font-weight: 400; color: #444; white-space: nowrap; letter-spacing: .2px; }
.vscroll { width: 16px; flex: none; background: #e6e6e6; margin-top: 1px; display: flex; flex-direction: column; align-items: center; justify-content: space-between; padding: 5px 0; }
.files-margin { width: 65px; flex: none; }

/* Download notice */
.download-bar {
  position: absolute;
  left: 203px;
  bottom: 0;
  width: 959px;
  height: 54px;
  background: #f0f0f0;
  border: 2px solid #0078d7;
  border-bottom: 0;
  display: flex;
  align-items: center;
  padding: 0 0 0 21px;
  font-family: "Open Sans", "Liberation Sans", sans-serif;
  font-size: 14px;
  color: #111;
}
.download-text { letter-spacing: .1px; }
.download-btn { margin-left: auto; width: 132px; height: 32px; background: #c4c4c4; display: flex; align-items: center; justify-content: center; font-size: 14px; letter-spacing: -.25px; }
.download-x { margin: 0 17px 0 18px; }

/* Taskbars */
.taskbar { height: 30px; flex: none; display: flex; align-items: stretch; background: #0e0e0e; color: #fff; }
.taskbar-left { background: linear-gradient(90deg, #0d0d0d, #0e0e0e 75%, #1b2410 90%, #131a0e 97%, #0d0d0d); }
.tb-slot { width: 37px; display: flex; align-items: center; justify-content: center; position: relative; }
.tb-first { width: 36px; }
.tb-tv { width: 39px; padding-right: 3px; }
.tb-active { width: 36px; background: #333; margin-right: .5px; }
.tb-active::after, .tb-open::after { content: ""; position: absolute; bottom: 0; height: 2px; background: #76b9ed; }
.tb-active::after { left: 0; right: 0; }
.tb-open::after { left: 4.5px; right: 4.5px; }
.tray {
  margin-left: auto;
  width: 278px;
  display: grid;
  grid-template-columns: 24px 34px 18px 28px 20px 28px 31px 42px 38px;
  align-items: center;
  justify-items: center;
  padding-right: 15px;
  font-size: 11px;
}
.tray-text { letter-spacing: -.3px; }
.right-clock { margin-left: auto; align-self: center; padding-right: 8px; font-size: 12px; color: #ddd; }
.taskbar-right { width: 1920px; }

/* Freeplane */
.fp-title { height: 25px; flex: none; display: flex; align-items: center; padding-left: 2px; background: #fff; }
.fp-bee { margin-right: 7px; }
.fp-title-text { font-size: 12px; color: #9a9a9a; letter-spacing: -.3px; white-space: nowrap; }
.fp-winctl { margin-left: auto; display: grid; grid-template-columns: 45px 47px 47px; justify-items: center; align-items: center; width: 139px; margin-right: 1px; }
.fp-menu { height: 17px; flex: none; display: flex; align-items: center; background: #fff; font-size: 13px; color: #444; letter-spacing: -.25px; line-height: 17px; padding-left: 4px; }
.fp-m { white-space: nowrap; }
.m1 { width: 54px; }
.m2 { width: 42px; }
.m3 { width: 64px; }
.m4 { width: 61px; }
.m5 { width: 58px; }
.m6 { width: 39px; }
.m7 { width: 81px; }
.m8 { width: 49px; }
.fp-toolbar {
  height: 27px;
  flex: none;
  display: flex;
  align-items: center;
  padding-left: 6px;
  background: #eeeeee;
  border-top: 1px solid #a8a8a8;
  border-bottom: 1px solid #a8a8a8;
  font-size: 13px;
}
.ti { width: 25px; height: 25px; display: flex; align-items: center; justify-content: center; flex: none; overflow: visible; }
.ti-sm { margin-left: 1px; }
.ti-mt { margin-left: 2px; }
.ti-37 { width: 37px; }
.ti-29 { width: 29px; }
.ti-42 { width: 42px; }
.ti-30 { width: 30px; }
.ti-26 { width: 26px; }
.fp-sep { width: 1px; height: 23px; background: #a0a0a0; flex: none; margin: 0 2px; }
.fp-combo { height: 25px; display: flex; align-items: center; background: #dcdcdc; flex: none; position: relative; }
.combo-zoom { width: 140px; padding-left: 6px; }
.combo-style { width: 194px; margin-left: 1px; background: #e0e0e0; padding: 3px; }
.combo-font { width: 212px; margin-left: 2px; background: #e0e0e0; padding: 3px; }
.combo-size { width: 62px; margin-left: 4px; background: #fff; border: 1px solid #ccc; padding-left: 3px; }
.combo-text { letter-spacing: -.3px; }
.combo-field { flex: 1; height: 19px; background: #fff; padding-left: 3px; margin-right: 16px; line-height: 19px; font-size: 13px; letter-spacing: -.3px; }
.combo-field-plain { background: transparent; }
.combo-caret { position: absolute; right: 4px; top: 10px; }
.fp-b { font: bold 25px "Liberation Serif", serif; color: #111; }
.fp-i { font: italic 25px "Liberation Serif", serif; color: #111; }
.fp-main { flex: 1; min-height: 0; display: flex; padding: 0 7px; background: #eeeeee; position: relative; }
.fp-canvas { flex: 1; background: #fff; border: 1px solid #8d8f9f; position: relative; }
.mind-node {
  position: absolute;
  left: 714px;
  top: 379px;
  width: 374px;
  height: 137px;
  border-radius: 50%;
  border: 1px solid #8a8a8a;
  background: #ccffff;
  display: flex;
  align-items: center;
  justify-content: center;
  padding: 4px 6px 0 0;
  font: 24px/32.5px "Liberation Sans", Arial, sans-serif;
  color: #000;
  text-align: center;
}
.handle { position: absolute; top: 473px; }
.handle-l { left: 1px; }
.handle-r { right: 1px; }
.side-tick { position: absolute; right: 4px; top: 247px; width: 1px; height: 22px; background: #777; }
.side-mark { position: absolute; right: 1px; top: 220px; width: 5px; height: 12px; background: linear-gradient(#fff 50%, #f0a020 50%, #3344aa); }
.fp-status { height: 20px; flex: none; display: flex; align-items: center; background: #eeeeee; padding-left: 10px; }
.abc { width: 22px; height: 19px; border: 1px solid #c8c8c8; background: #f4f4f4; font: 12px/16px "Liberation Sans", sans-serif; color: #1c2a6a; text-align: center; border-bottom: 3px solid #b0b0b0; }
.abc-b { font-weight: 700; }
.status-dot { width: 3px; height: 3px; margin-left: 5px; border: 1px solid #aaa; }
```
